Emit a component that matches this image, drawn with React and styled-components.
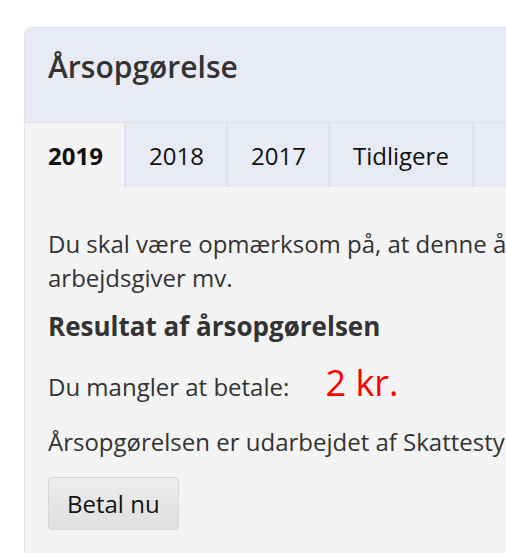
import React from 'react';
import styled, { createGlobalStyle } from 'styled-components';

const GlobalStyle = createGlobalStyle`
    html, body {
        margin: 0;
        padding: 0;
        background: #ffffff;
        overflow: hidden;
    }
    body {
        font-family: "Open Sans", "Noto Sans", sans-serif;
        color: #333333;
    }
`;

const Page = styled.div`
    padding: 27px 0 0 24px;
`;

const Card = styled.section`
    width: 820px;
    min-height: 526px;
    border: 1px solid #dfe2f1;
    border-right: none;
    border-bottom: none;
    border-radius: 8px 0 0 0;
    background: #f4f4f4;
    overflow: hidden;
`;

const Header = styled.header`
    background: #e8ebf6;
    height: 94px;
    box-sizing: border-box;
    padding: 18px 23px 0;
`;

const Title = styled.h1`
    margin: 0;
    font-size: 30px;
    font-weight: 600;
    color: #333333;
`;

const Tabs = styled.nav`
    display: flex;
    background: #e8ebf6;
    border-top: 1px solid #dde0ee;
`;

const Tab = styled.div`
    height: 64px;
    padding: 0 23px;
    display: flex;
    align-items: center;
    font-size: 24px;
    font-weight: ${props => props.active ? 700 : 400};
    color: #111111;
    background: ${props => props.active ? '#f4f4f4' : 'transparent'};
    border-right: 2px solid #dde0ee;
    width: ${props => props.w}px;
    box-sizing: border-box;
`;

const Body = styled.div`
    padding: 40px 23px 20px;
`;

const Text = styled.p`
    margin: 0 0 ${props => props.mb || 0}px;
    font-size: 24px;
    line-height: 33.6px;
    white-space: nowrap;
`;

const SubTitle = styled.h2`
    margin: 17px 0 24px;
    font-size: 26px;
    font-weight: 700;
    line-height: 31.2px;
    color: #333333;
`;

const Amount = styled.span`
    color: #ff0000;
    font-size: 36px;
    line-height: 34px;
    margin-left: 30px;
`;

const Button = styled.button`
    display: block;
    font-family: "Open Sans", "Noto Sans", sans-serif;
    font-size: 24px;
    color: #111111;
    height: 53px;
    padding: 0 18px;
    border: 1px solid #d6d6d6;
    border-radius: 4px;
    background: linear-gradient(#ececec, #e0e0e0);
`;

export default function App() {
    return (
        <>
            <GlobalStyle />
            <Page>
                <Card>
                    <Header>
                        <Title>Årsopgørelse</Title>
                    </Header>
                    <Tabs>
                        <Tab active w={101}>2019</Tab>
                        <Tab w={102}>2018</Tab>
                        <Tab w={102}>2017</Tab>
                        <Tab w={144}>Tidligere</Tab>
                    </Tabs>
                    <Body>
                        <Text>Du skal være opmærksom på, at denne årsopgørelse er baseret på oplysninger fra din</Text>
                        <Text>arbejdsgiver mv.</Text>
                        <SubTitle>Resultat af årsopgørelsen</SubTitle>
                        <Text mb={21}>Du mangler at betale: <Amount>2 kr.</Amount></Text>
                        <Text mb={18}>Årsopgørelsen er udarbejdet af Skattestyrelsen.</Text>
                        <Button>Betal nu</Button>
                    </Body>
                </Card>
            </Page>
        </>
    );
}
